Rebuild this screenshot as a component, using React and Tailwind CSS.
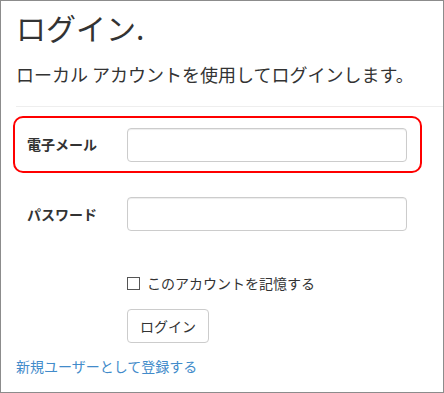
import React from 'react'

const font = "font-['Noto_Sans_CJK_JP','Noto_Sans',sans-serif]"

const App = () => {
  return (
    <div className={`w-[444px] h-[393px] bg-white border border-[#8c8c8c] overflow-hidden text-[#333] ${font}`}>
      <h2 className="ml-[15px] mt-[10px] text-[30px] leading-[33px] font-normal">ログイン.</h2>
      <h4 className="ml-[15px] mt-[20px] text-[18px] leading-[20px] font-normal">ローカル アカウントを使用してログインします。</h4>
      <hr className="ml-[15px] mt-[22px] border-t border-[#eee]" />

      <div className="ml-[12px] mt-[9px] w-[409px] h-[57px] border-2 border-[#f00] rounded-[10px] flex items-center">
        <label className="w-[112px] pl-[12px] text-[14px] font-bold">電子メール</label>
        <input className="w-[280px] h-[34px] border border-[#ccc] rounded-[4px] shadow-[inset_0_1px_1px_rgba(0,0,0,0.075)]" />
      </div>

      <div className="ml-[14px] mt-[24px] flex items-center">
        <label className="w-[112px] pl-[12px] text-[14px] font-bold">パスワード</label>
        <input type="password" className="w-[280px] h-[34px] border border-[#ccc] rounded-[4px] shadow-[inset_0_1px_1px_rgba(0,0,0,0.075)]" />
      </div>

      <div className="ml-[126px] mt-[42px] flex items-center gap-[7px]">
        <span className="w-[13px] h-[13px] border border-[#555] bg-white"></span>
        <span className="text-[14px] leading-[20px]">このアカウントを記憶する</span>
      </div>

      <button className="ml-[126px] mt-[16px] w-[82px] h-[34px] border border-[#ccc] rounded-[4px] bg-white text-[14px]">ログイン</button>

      <a className="block ml-[15px] mt-[13px] text-[14px] leading-[20px] text-[#428bca]">新規ユーザーとして登録する</a>
    </div>
  )
}

export default App
